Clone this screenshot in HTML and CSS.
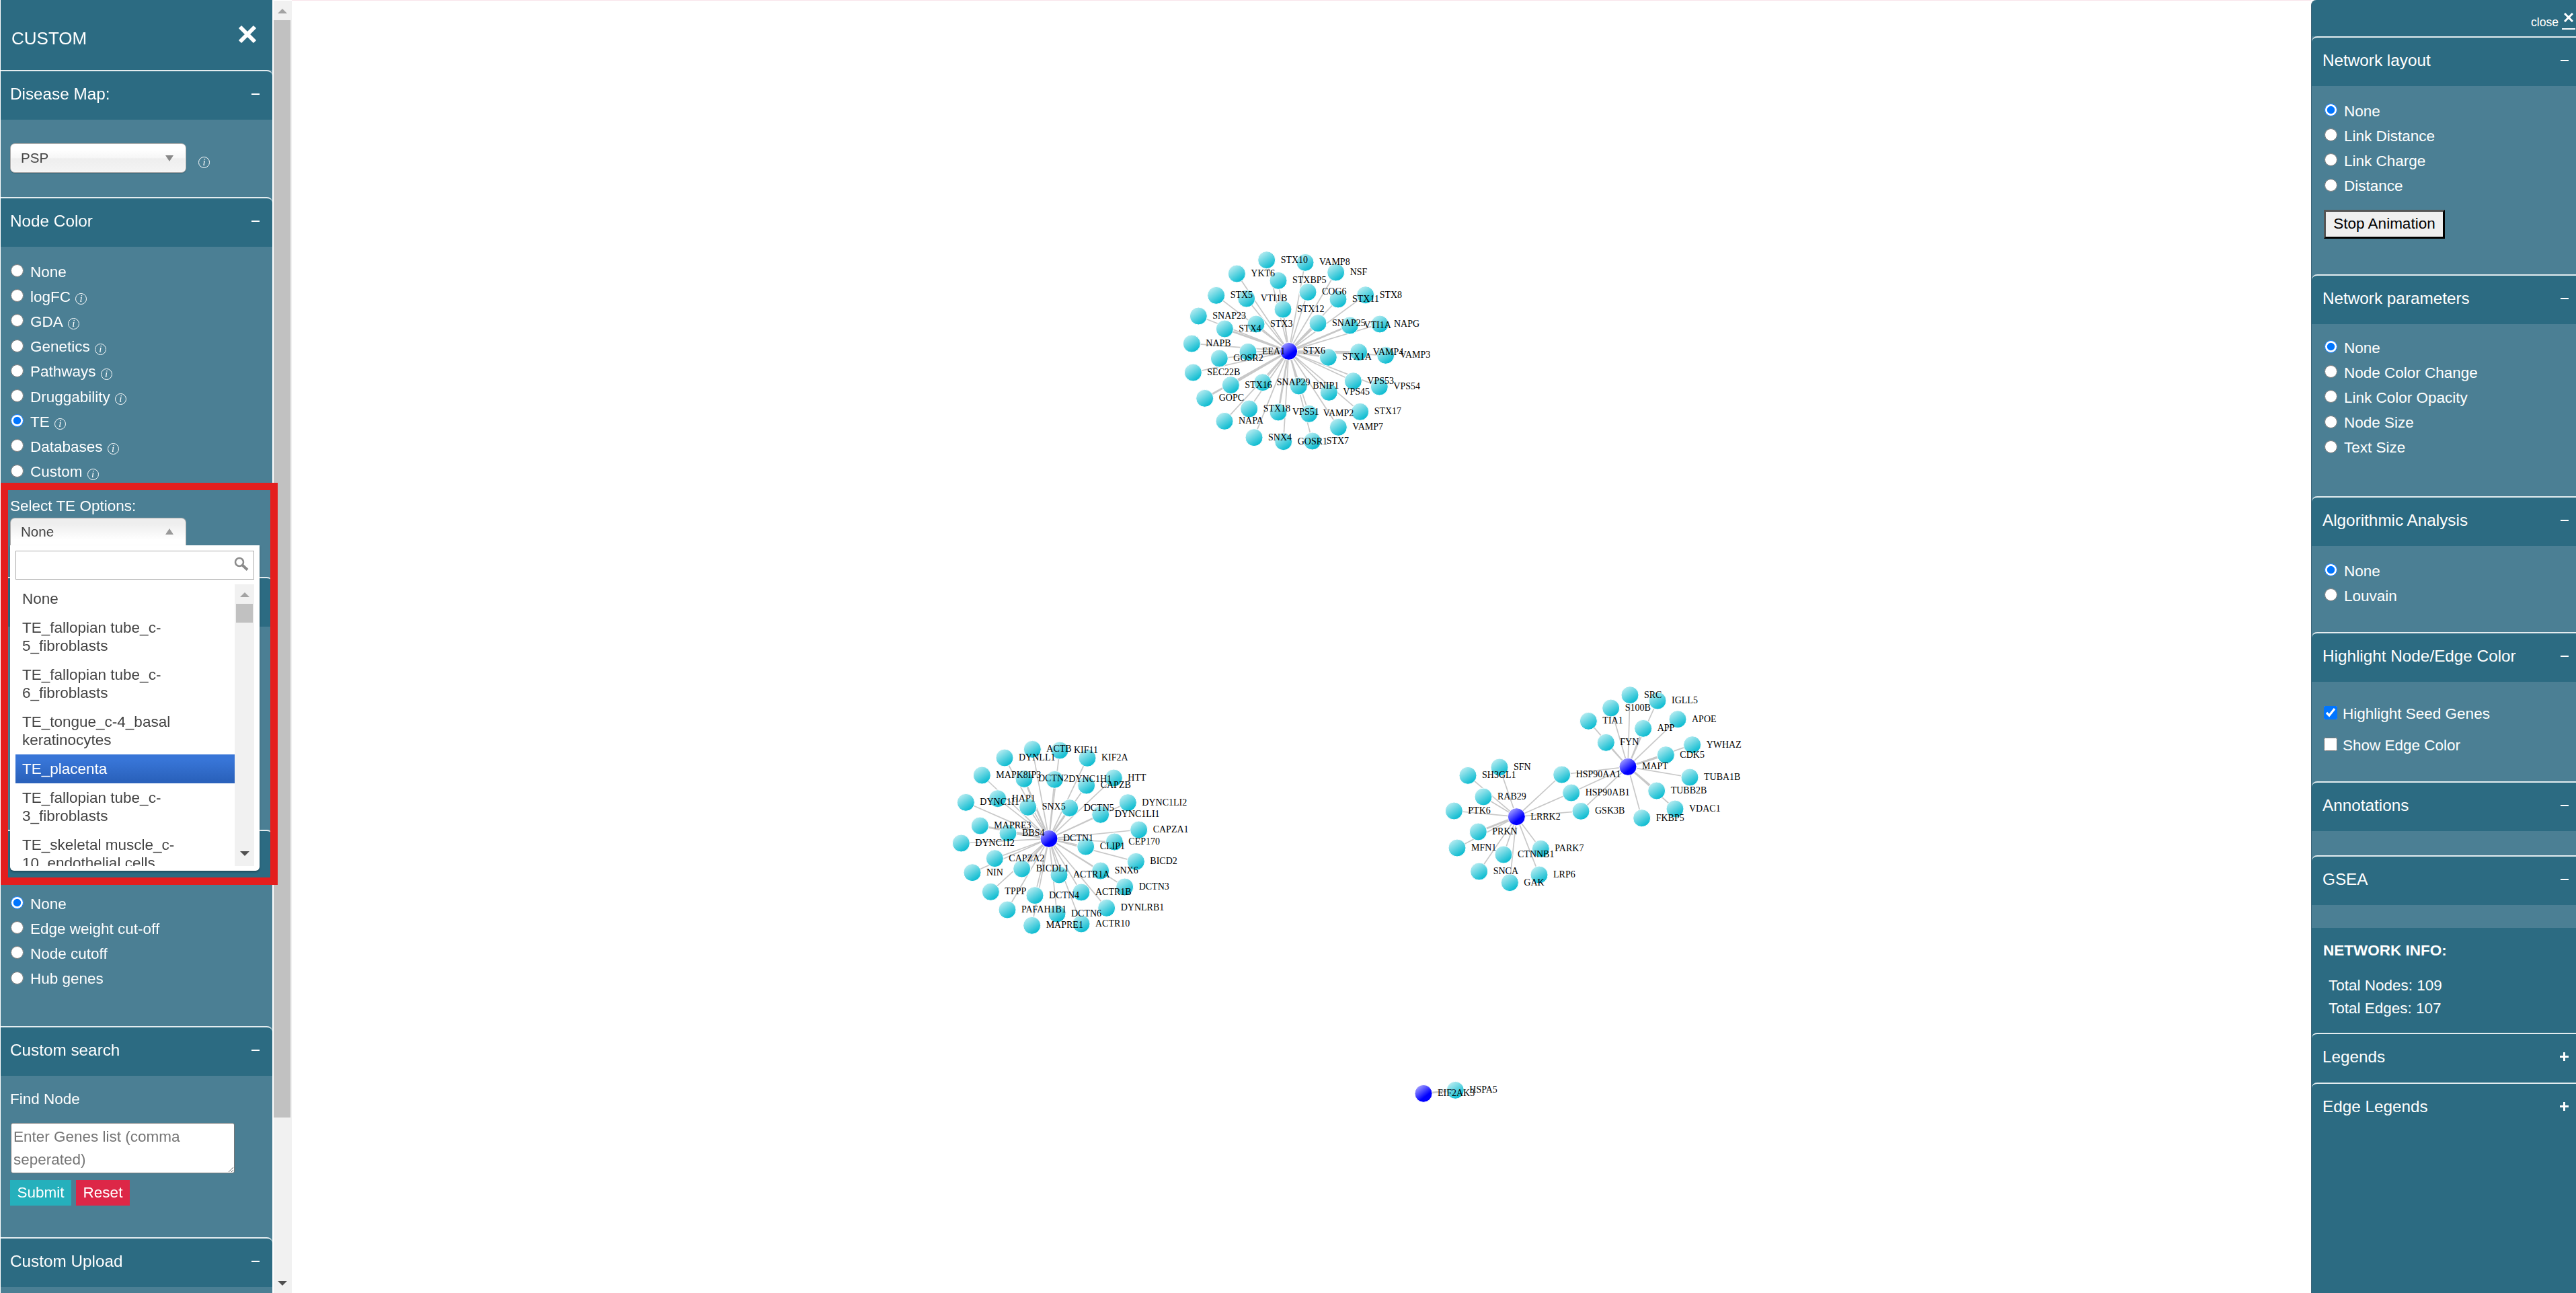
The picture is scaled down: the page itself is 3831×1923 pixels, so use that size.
FILE: index.html
```html
<!DOCTYPE html>
<html lang="en">
<head>
  <meta charset="UTF-8">
  <title>Network viewer</title>
  <link rel="stylesheet" href="styles.css">
</head>
<body>

  <aside class="sidebar">
    <div class="sidebar-title">
      <span>CUSTOM</span>
      <svg class="sidebar-close" width="28" height="28" viewBox="0 0 28 28"><path d="M3 3L25 25M25 3L3 25"/></svg>
    </div>

    <section class="sec sec-map">
      <div class="sec-head"><span>Disease Map:</span><i class="minus"></i></div>
      <div class="sec-body">
        <div class="map-row">
          <div class="chosen">
            <div class="chosen-head">PSP<i class="tri tri-down"></i></div>
          </div>
          <span class="info">i</span>
        </div>
      </div>
    </section>

    <section class="sec sec-color">
      <div class="sec-head"><span>Node Color</span><i class="minus"></i></div>
      <div class="sec-body">
        <label class="opt"><input type="radio" name="color">None</label>
        <label class="opt"><input type="radio" name="color">logFC<span class="info">i</span></label>
        <label class="opt"><input type="radio" name="color">GDA<span class="info">i</span></label>
        <label class="opt"><input type="radio" name="color">Genetics<span class="info">i</span></label>
        <label class="opt"><input type="radio" name="color">Pathways<span class="info">i</span></label>
        <label class="opt"><input type="radio" name="color">Druggability<span class="info">i</span></label>
        <label class="opt"><input type="radio" name="color" checked>TE<span class="info">i</span></label>
        <label class="opt"><input type="radio" name="color">Databases<span class="info">i</span></label>
        <label class="opt"><input type="radio" name="color">Custom<span class="info">i</span></label>

        <div class="te-label">Select TE Options:</div>
        <div class="chosen chosen-open">
          <div class="chosen-head">None<i class="tri tri-up"></i></div>
          <div class="chosen-drop">
            <div class="chosen-search">
              <svg width="22" height="22" viewBox="0 0 22 22"><circle cx="8" cy="8" r="6"/><path class="handle" d="M12.5 12.5L20 19.5"/></svg>
            </div>
            <div class="chosen-list">
              <ul class="chosen-items">
                <li>None</li>
                <li>TE_fallopian tube_c-<br>5_fibroblasts</li>
                <li>TE_fallopian tube_c-<br>6_fibroblasts</li>
                <li>TE_tongue_c-4_basal<br>keratinocytes</li>
                <li class="selected">TE_placenta</li>
                <li>TE_fallopian tube_c-<br>3_fibroblasts</li>
                <li>TE_skeletal muscle_c-<br>10_endothelial cells</li>
              </ul>
              <div class="scrollbar scrollbar-small">
                <i class="tri tri-up"></i>
                <div class="thumb"></div>
                <i class="tri tri-down"></i>
              </div>
            </div>
          </div>
        </div>
      </div>
    </section>

    <section class="sec sec-hidden-a">
      <div class="sec-head"><span></span><i class="minus"></i></div>
      <div class="sec-body"></div>
    </section>

    <section class="sec sec-filter">
      <div class="sec-head"><span></span><i class="minus"></i></div>
      <div class="sec-body">
        <label class="opt"><input type="radio" name="filter" checked>None</label>
        <label class="opt"><input type="radio" name="filter">Edge weight cut-off</label>
        <label class="opt"><input type="radio" name="filter">Node cutoff</label>
        <label class="opt"><input type="radio" name="filter">Hub genes</label>
      </div>
    </section>

    <section class="sec sec-search">
      <div class="sec-head"><span>Custom search</span><i class="minus"></i></div>
      <div class="sec-body">
        <div class="find-label">Find Node</div>
        <textarea class="gene-list" placeholder="Enter Genes list (comma seperated)"></textarea>
        <div class="btn-row">
          <button class="btn btn-submit">Submit</button>
          <button class="btn btn-reset">Reset</button>
        </div>
      </div>
    </section>

    <section class="sec sec-upload">
      <div class="sec-head"><span>Custom Upload</span><i class="minus"></i></div>
      <div class="sec-body"></div>
    </section>
  </aside>

  <div class="scrollbar scrollbar-page">
    <i class="tri tri-up"></i>
    <div class="thumb"></div>
    <div class="track-fill"></div>
    <i class="tri tri-down"></i>
  </div>

  <main class="canvas">
    <svg id="graph" width="3003" height="1922" viewBox="434 1 3003 1922">
      <defs>
        <linearGradient id="grad-node" x1="0.15" y1="0.05" x2="0.75" y2="0.95">
          <stop offset="0" stop-color="#c0eff3"/>
          <stop offset="0.95" stop-color="#0cbcd1"/>
        </linearGradient>
        <linearGradient id="grad-hub" x1="0.1" y1="0.05" x2="0.75" y2="0.9">
          <stop offset="0" stop-color="#b4b0ff"/>
          <stop offset="0.75" stop-color="#0000ff"/>
        </linearGradient>
      </defs>
    </svg>
  </main>

  <aside class="rightbar">
    <div class="rightbar-top">
      <span class="close-text">close</span>
      <span class="close-x"><svg width="14" height="14" viewBox="0 0 14 14"><path d="M1 1L13 13M13 1L1 13"/></svg></span>
    </div>

    <section class="sec sec-layout">
      <div class="sec-head"><span>Network layout</span><i class="minus"></i></div>
      <div class="sec-body">
        <label class="opt"><input type="radio" name="layout" checked>None</label>
        <label class="opt"><input type="radio" name="layout">Link Distance</label>
        <label class="opt"><input type="radio" name="layout">Link Charge</label>
        <label class="opt"><input type="radio" name="layout">Distance</label>
        <button class="stop-btn">Stop Animation</button>
      </div>
    </section>

    <section class="sec sec-params">
      <div class="sec-head"><span>Network parameters</span><i class="minus"></i></div>
      <div class="sec-body">
        <label class="opt"><input type="radio" name="params" checked>None</label>
        <label class="opt"><input type="radio" name="params">Node Color Change</label>
        <label class="opt"><input type="radio" name="params">Link Color Opacity</label>
        <label class="opt"><input type="radio" name="params">Node Size</label>
        <label class="opt"><input type="radio" name="params">Text Size</label>
      </div>
    </section>

    <section class="sec sec-algo">
      <div class="sec-head"><span>Algorithmic Analysis</span><i class="minus"></i></div>
      <div class="sec-body">
        <label class="opt"><input type="radio" name="algo" checked>None</label>
        <label class="opt"><input type="radio" name="algo">Louvain</label>
      </div>
    </section>

    <section class="sec sec-highlight">
      <div class="sec-head"><span>Highlight Node/Edge Color</span><i class="minus"></i></div>
      <div class="sec-body">
        <label class="opt opt-check"><input type="checkbox" checked>Highlight Seed Genes</label>
        <label class="opt opt-check"><input type="checkbox">Show Edge Color</label>
      </div>
    </section>

    <section class="sec sec-annot">
      <div class="sec-head"><span>Annotations</span><i class="minus"></i></div>
      <div class="sec-body"></div>
    </section>

    <section class="sec sec-gsea">
      <div class="sec-head"><span>GSEA</span><i class="minus"></i></div>
      <div class="sec-body"></div>
    </section>

    <div class="net-info">
      <div class="net-info-title">NETWORK INFO:</div>
      <div class="net-info-row">Total Nodes: 109</div>
      <div class="net-info-row">Total Edges: 107</div>
    </div>

    <section class="sec sec-closed">
      <div class="sec-head"><span>Legends</span><i class="plus"></i></div>
    </section>
    <section class="sec sec-closed sec-last">
      <div class="sec-head"><span>Edge Legends</span><i class="plus"></i></div>
    </section>
  </aside>

  <div class="red-mark"></div>

  <script src="graph.js"></script>
</body>
</html>
```

FILE: styles.css
```css
* {
  box-sizing: border-box;
}
body {
  margin: 0;
  width: 3831px;
  height: 1923px;
  overflow: hidden;
  display: flex;
  position: relative;
  background-color: #fff;
  color: #fff;
  font-family: "Liberation Sans", Arial, sans-serif;
  font-size: 22.5px;
}

/* panels */
.sidebar {
  width: 404px;
  height: 1923px;
  margin-left: 1px;
  overflow: hidden;
  flex: none;
  background-color: #4b7f94;
}
.sidebar-title {
  height: 104px;
  padding: 10px 23px 0 16px;
  display: flex;
  justify-content: space-between;
  align-items: center;
  background-color: #2c6b82;
  font-size: 26px;
}
.sidebar-close {
  margin-bottom: 12px;
}
.sidebar-close path {
  stroke: #fff;
  stroke-width: 6;
  fill: none;
}
.rightbar {
  width: 394px;
  height: 1923px;
  flex: none;
  display: flex;
  flex-direction: column;
  overflow: hidden;
  background-color: #2c6b82;
  border-left: 1px solid #3b6478;
  border-top-left-radius: 8px;
}
.rightbar-top {
  height: 54px;
  padding: 19px 1px 0 0;
  display: flex;
  justify-content: flex-end;
  align-items: flex-start;
  font-size: 17.6px;
}
.close-text {
  line-height: 20px;
  margin: 4px 5px 0 0;
}
.close-x {
  width: 20px;
  padding-bottom: 9px;
  border-bottom: 2px solid #fff;
  text-align: center;
}
.close-x svg {
  display: block;
  margin: 0 auto;
}
.close-x path {
  stroke: #fff;
  stroke-width: 3;
  fill: none;
}

/* sections */
.sec {
  background-color: #4b7f94;
}
.sec-head {
  height: 74px;
  display: flex;
  justify-content: space-between;
  align-items: center;
  padding: 0 19px 5px 14px;
  background-color: #2c6b82;
  border-top: 2px solid #e4edf0;
  border-top-right-radius: 8px;
  font-size: 24.3px;
}
.rightbar .sec-head {
  padding: 0 11px 5px 16px;
  border-top-right-radius: 0;
  border-top-left-radius: 8px;
}
.minus {
  width: 12px;
  height: 2px;
  background-color: #fff;
}
.plus {
  width: 13px;
  height: 13px;
  background: linear-gradient(#fff, #fff) center / 13px 3px no-repeat,
    linear-gradient(#fff, #fff) center / 3px 13px no-repeat;
}
.sec-body {
  padding-left: 14px;
}
.rightbar .sec-body {
  padding-left: 18px;
}
.sec-map .sec-body {
  height: 115px;
  padding-top: 35px;
}
.sec-color .sec-body {
  height: 491px;
  padding-top: 17px;
}
.sec-hidden-a .sec-body {
  height: 302px;
}
.sec-filter .sec-body {
  height: 218px;
  padding-top: 16px;
}
.sec-search .sec-body {
  height: 240px;
}
.sec-upload .sec-body {
  height: 60px;
}
.sec-layout .sec-body {
  height: 280px;
  padding-top: 17px;
}
.sec-params .sec-body {
  height: 256px;
  padding-top: 15px;
}
.sec-algo .sec-body {
  height: 128px;
  padding-top: 17px;
}
.sec-highlight .sec-body {
  height: 148px;
  padding-top: 22px;
}
.sec-annot .sec-body {
  height: 36px;
}
.sec-gsea .sec-body {
  height: 34px;
}
.sec-closed {
  background-color: #2c6b82;
}
.sec-last {
  flex: 1;
}

/* options */
.opt {
  height: 37.2px;
  padding-top: 4px;
  display: flex;
  align-items: center;
}
.opt input {
  width: 19px;
  height: 19px;
  margin: 0 10px 4px 1px;
  flex: none;
}
.opt-check {
  height: 47px;
}
.opt-check input {
  width: 20px;
  height: 20px;
  margin: 0 8px 4px 0;
}
.info {
  width: 17px;
  height: 17px;
  margin: 6px 0 0 7px;
  display: inline-flex;
  justify-content: center;
  align-items: center;
  flex: none;
  border: 1px solid #fff;
  border-radius: 50%;
  font-family: "Liberation Serif", "Times New Roman", serif;
  font-style: italic;
  font-size: 15px;
  line-height: 1;
}
.map-row {
  display: flex;
  align-items: center;
}
.map-row .info {
  margin-left: 18px;
  margin-top: 12px;
}
.te-label {
  margin-top: 20px;
  line-height: 27px;
}
.find-label {
  padding-top: 21px;
  line-height: 28px;
}
.gene-list {
  display: block;
  width: 333px;
  height: 75px;
  margin: 21px 0 0 1px;
  padding: 3px;
  border: 1px solid #767676;
  border-radius: 3px;
  font-family: "Liberation Sans", Arial, sans-serif;
  font-size: 22.5px;
  line-height: 34px;
}
.btn-row {
  display: flex;
  gap: 7px;
  margin: 10px 0 0 0;
}
.btn {
  height: 38px;
  padding: 0 10px;
  border: 0;
  color: #fff;
  font-family: "Liberation Sans", Arial, sans-serif;
  font-size: 22.5px;
}
.btn-submit {
  width: 91px;
  background-color: #25b0bc;
}
.btn-reset {
  width: 80px;
  background-color: #dd2747;
}
.stop-btn {
  display: block;
  width: 180px;
  height: 43px;
  margin-top: 18px;
  padding: 0;
  border: 3px solid;
  border-color: #555 #000 #000 #555;
  background-color: #efefef;
  color: #000;
  font-family: "Liberation Sans", Arial, sans-serif;
  font-size: 22.5px;
}

/* network info */
.net-info {
  height: 156px;
  padding: 20px 0 0 17px;
}
.net-info-title {
  font-weight: bold;
  line-height: 28px;
  margin-bottom: 21px;
}
.net-info-row {
  padding-left: 8px;
  line-height: 34px;
}

/* chosen select */
.chosen {
  position: relative;
  width: 262px;
  color: #444;
  font-size: 20.6px;
}
.chosen-head {
  height: 44px;
  padding-left: 15px;
  display: flex;
  justify-content: space-between;
  align-items: center;
  padding-right: 18px;
  border: 1px solid #aaa;
  border-radius: 7px;
  background: linear-gradient(#fff 20%, #f6f6f6 50%, #eee 52%, #f4f4f4 100%);
  box-shadow: inset 0 0 3px #fff, 0 1px 1px rgba(0, 0, 0, 0.2);
}
.chosen-open {
  margin-top: 4px;
}
.chosen-open .chosen-head {
  height: 41px;
  border-bottom: 0;
  border-radius: 7px 7px 0 0;
  background: linear-gradient(#eee 20%, #fff 80%);
  box-shadow: none;
}
.chosen-drop {
  position: absolute;
  top: 41px;
  left: 0;
  width: 371px;
  height: 484px;
  padding: 8px;
  background-color: #fff;
  border-radius: 0 0 6px 6px;
  box-shadow: 0 2px 3px rgba(0, 0, 0, 0.3);
  font-size: 22.5px;
}
.chosen-search {
  height: 43px;
  padding: 8px 7px 0 0;
  display: flex;
  justify-content: flex-end;
  border: 1px solid #aaa;
}
.chosen-search circle,
.chosen-search path {
  fill: none;
  stroke: #8b8b8b;
  stroke-width: 2.5;
}
.chosen-search .handle {
  stroke-width: 4;
}
.chosen-list {
  height: 419px;
  margin-top: 7px;
  display: flex;
  overflow: hidden;
}
.chosen-items {
  flex: 1;
  margin: 0;
  padding: 0;
  list-style: none;
  line-height: 27px;
}
.chosen-items li {
  padding: 8px 10px;
}
.chosen-items .selected {
  background: linear-gradient(#3875d7 20%, #2a62bc 90%);
  color: #fff;
}

/* triangles and scrollbars */
.tri {
  display: block;
  width: 0;
  height: 0;
  flex: none;
  border-left: 7px solid transparent;
  border-right: 7px solid transparent;
}
.tri-up {
  border-bottom: 7px solid #a3a3a3;
}
.tri-down {
  border-top: 7px solid #505050;
}
.chosen-head .tri-down {
  border-left-width: 6px;
  border-right-width: 6px;
  border-top: 9px solid #888;
}
.chosen-head .tri-up {
  border-left-width: 6px;
  border-right-width: 6px;
  border-bottom: 9px solid #999;
}
.scrollbar {
  display: flex;
  flex-direction: column;
  align-items: center;
  background-color: #f1f1f1;
}
.scrollbar .thumb {
  background-color: #c1c1c1;
}
.scrollbar-page {
  width: 27px;
  height: 1922px;
  margin: 1px 0 0 2px;
  flex: none;
  padding: 12px 2px 11px 0;
}
.scrollbar-page .thumb {
  width: 25px;
  height: 1632px;
  margin-top: 10px;
}
.track-fill {
  flex: 1;
}
.scrollbar-small {
  width: 29px;
  flex: none;
  padding: 12px 0;
}
.scrollbar-small .thumb {
  width: 25px;
  height: 28px;
  margin-top: 10px;
  margin-bottom: 340px;
}

/* graph */
.canvas {
  width: 3003px;
  flex: none;
  border-top: 1px solid #f8e3ea;
}
#graph {
  display: block;
}
.edge {
  stroke: #c8c8c8;
  stroke-width: 1.7;
}
.edge-thick {
  stroke-width: 2.8;
}
.node {
  stroke: #fff;
  stroke-width: 1;
  fill: url(#grad-node);
}
.node-hub {
  fill: url(#grad-hub);
}
.node-label {
  fill: #000;
  font-family: "Liberation Serif", "Times New Roman", serif;
  font-size: 14px;
}

/* red annotation round the open dropdown */
.red-mark {
  position: absolute;
  left: 1px;
  top: 718px;
  width: 412px;
  height: 598px;
  border: 11px solid #e41e1e;
  pointer-events: none;
}
```

FILE: graph.js
```js
// node positions were read off at 3x, so they get divided by 3 below
const clusters = [
  {
    origin: [1730, 350],
    hubs: [['STX6', 560, 517]],
    nodes: [
      ['STX10', 461, 110], ['VAMP8', 633, 121], ['NSF', 770, 165], ['YKT6', 328, 171],
      ['STXBP5', 513, 202], ['COG6', 645, 253], ['STX8', 902, 266], ['STX11', 780, 285],
      ['STX5', 236, 268], ['VTI1B', 371, 282], ['STX12', 534, 330], ['SNAP23', 157, 360],
      ['STX3', 414, 396], ['STX4', 274, 417], ['SNAP25', 690, 392], ['VTI1A', 832, 402],
      ['NAPG', 966, 396], ['NAPB', 127, 483], ['EEA1', 378, 520], ['GOSR2', 250, 549],
      ['STX1A', 736, 544], ['VAMP4', 872, 521], ['VAMP3', 992, 535], ['SEC22B', 133, 612],
      ['STX16', 301, 668], ['SNAP29', 443, 656], ['BNIP1', 604, 672], ['VPS45', 739, 700],
      ['VPS53', 847, 650], ['VPS54', 964, 675], ['GOPC', 185, 727], ['STX18', 383, 774],
      ['VPS51', 513, 789], ['VAMP2', 650, 796], ['STX17', 878, 787], ['NAPA', 273, 829],
      ['VAMP7', 781, 856], ['SNX4', 405, 902], ['GOSR1', 536, 920], ['STX7', 665, 918]
    ]
  },
  {
    origin: [1400, 1080],
    hubs: [['DCTN1', 480, 502]],
    nodes: [
      ['ACTB', 406, 103], ['KIF11', 528, 108], ['KIF2A', 651, 142], ['DYNLL1', 282, 141],
      ['MAPK8IP3', 181, 219], ['DCTN2', 369, 235], ['DYNC1H1', 505, 238], ['CAPZB', 647, 264],
      ['HTT', 769, 231], ['HAP1', 251, 323], ['DYNC1I1', 109, 340], ['SNX5', 386, 361],
      ['DCTN5', 572, 365], ['DYNC1LI1', 710, 394], ['DYNC1LI2', 832, 341], ['MAPRE3', 172, 444],
      ['BBS4', 297, 477], ['CAPZA1', 881, 462], ['CEP170', 772, 516], ['CLIP1', 644, 537],
      ['DYNC1I2', 88, 522], ['CAPZA2', 238, 590], ['BICDL1', 359, 636], ['ACTR1A', 525, 663],
      ['SNX6', 710, 645], ['BICD2', 868, 604], ['NIN', 138, 653], ['DCTN3', 818, 717],
      ['TPPP', 220, 739], ['ACTR1B', 624, 741], ['DCTN4', 417, 755], ['DYNLRB1', 737, 811],
      ['PAFAH1B1', 294, 819], ['DCTN6', 516, 837], ['MAPRE1', 404, 889], ['ACTR10', 624, 882]
    ]
  },
  {
    origin: [2130, 1000],
    hubs: [['MAPT', 873, 421], ['LRRK2', 376, 644]],
    nodes: [
      ['SRC', 882, 101, 0], ['IGLL5', 1005, 126, 0], ['S100B', 797, 159, 0], ['TIA1', 697, 217, 0],
      ['APP', 941, 250, 0], ['APOE', 1095, 209, 0], ['FYN', 775, 313, 0], ['YWHAZ', 1160, 323, 0],
      ['CDK5', 1042, 368, 0], ['TUBA1B', 1149, 468, 0], ['TUBB2B', 1001, 528, 0], ['VDAC1', 1083, 609, 0],
      ['FKBP5', 935, 650, 0],
      ['HSP90AA1', 578, 456, 2], ['HSP90AB1', 620, 537, 2], ['GSK3B', 663, 619, 2],
      ['SFN', 300, 423, 1], ['SH3GL1', 159, 460, 1], ['RAB29', 228, 555, 1], ['PTK6', 97, 618, 1],
      ['PRKN', 205, 711, 1], ['MFN1', 111, 783, 1], ['CTNNB1', 318, 813, 1], ['PARK7', 484, 787, 1],
      ['SNCA', 209, 888, 1], ['LRP6', 477, 903, 1], ['GAK', 346, 938, 1]
    ]
  },
  {
    origin: [2080, 1590],
    hubs: [['EIF2AK3', 111, 109]],
    nodes: [['HSPA5', 253, 94]]
  }
];

const thick = ['STX4', 'STX16', 'GOPC', 'SNAP25', 'VTI1A', 'VAMP4', 'STX1A', 'VPS51',
  'DCTN5', 'MAPRE3', 'DCTN2', 'BICDL1', 'CDK5', 'TUBB2B', 'PRKN', 'EIF2AK3', 'HSPA5'];

const svg = document.getElementById('graph');
const edgeLayer = make('g', {});
const nodeLayer = make('g', {});
const labelLayer = make('g', {});
svg.append(edgeLayer, nodeLayer, labelLayer);

function make(tag, attrs) {
  const el = document.createElementNS('http://www.w3.org/2000/svg', tag);
  for (const key in attrs) el.setAttribute(key, attrs[key]);
  return el;
}

function addNode(name, x, y, cls) {
  nodeLayer.append(make('circle', { cx: x, cy: y, r: 13, class: cls }));
  const label = make('text', { x: x + 21, y: y + 4, class: 'node-label' });
  label.textContent = name;
  labelLayer.append(label);
}

function addEdge(hub, x, y, name) {
  edgeLayer.append(make('line', {
    x1: hub[0], y1: hub[1], x2: x, y2: y,
    class: thick.includes(name) ? 'edge edge-thick' : 'edge'
  }));
}

clusters.forEach(function (c) {
  const hubs = c.hubs.map(function (h) {
    return [c.origin[0] + h[1] / 3, c.origin[1] + h[2] / 3];
  });
  c.nodes.forEach(function (n) {
    const x = c.origin[0] + n[1] / 3;
    const y = c.origin[1] + n[2] / 3;
    // 4th value says which hub the node hangs off, 2 means both
    const link = n[3] === undefined ? 0 : n[3];
    if (link === 2) {
      hubs.forEach(function (hub) { addEdge(hub, x, y, n[0]); });
    } else {
      addEdge(hubs[link], x, y, n[0]);
    }
    addNode(n[0], x, y, 'node');
  });
  c.hubs.forEach(function (h, i) {
    addNode(h[0], hubs[i][0], hubs[i][1], 'node node-hub');
  });
});
```
